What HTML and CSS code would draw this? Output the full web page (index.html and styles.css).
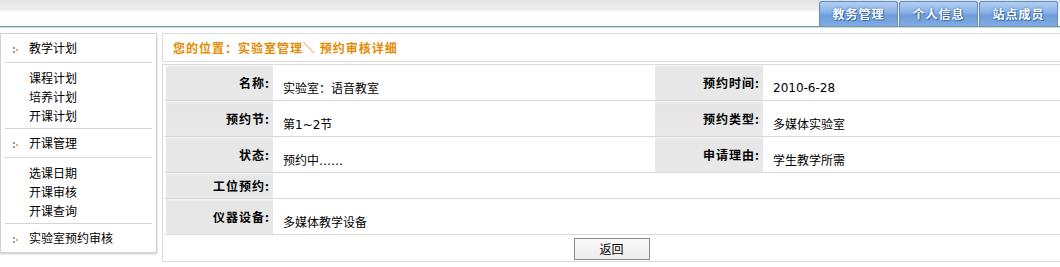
FILE: index.html
```html
<!DOCTYPE html>
<html>
<head>
<meta charset="utf-8">
<title>预约审核详细</title>
<link rel="stylesheet" href="styles.css">
</head>
<body>

<div class="top">
  <div class="tabs">
    <a class="tab" href="#">教务管理</a>
    <a class="tab" href="#">个人信息</a>
    <a class="tab" href="#">站点成员</a>
  </div>
</div>

<div class="main">
  <div class="side">
    <div class="head"><i class="dots"></i>教学计划</div>
    <ul class="sub">
      <li>课程计划</li>
      <li>培养计划</li>
      <li>开课计划</li>
    </ul>
    <div class="head"><i class="dots"></i>开课管理</div>
    <ul class="sub">
      <li>选课日期</li>
      <li>开课审核</li>
      <li>开课查询</li>
    </ul>
    <div class="head last"><i class="dots"></i>实验室预约审核</div>
  </div>

  <div class="content">
    <div class="crumb">您的位置：实验室管理＼ 预约审核详细</div>
    <table class="detail">
      <colgroup>
        <col class="c1"><col class="c2"><col class="c3"><col>
      </colgroup>
      <tr>
        <td class="lab first">名称:</td>
        <td class="val">实验室：语音教室</td>
        <td class="lab">预约时间:</td>
        <td class="val">2010-6-28</td>
      </tr>
      <tr>
        <td class="lab first">预约节:</td>
        <td class="val">第1~2节</td>
        <td class="lab">预约类型:</td>
        <td class="val">多媒体实验室</td>
      </tr>
      <tr>
        <td class="lab first">状态:</td>
        <td class="val">预约中……</td>
        <td class="lab">申请理由:</td>
        <td class="val">学生教学所需</td>
      </tr>
      <tr class="short">
        <td class="lab first">工位预约:</td>
        <td class="val" colspan="3"></td>
      </tr>
      <tr>
        <td class="lab first">仪器设备:</td>
        <td class="val" colspan="3">多媒体教学设备</td>
      </tr>
      <tr class="btnrow">
        <td colspan="4"><button class="btn" type="button">返回</button></td>
      </tr>
    </table>
  </div>
</div>

</body>
</html>
```

FILE: styles.css
```css
body {margin:0; background:#fff; font:12px "DejaVu Sans", "Noto Sans CJK SC", sans-serif; color:#000; overflow:hidden;}

.top {height:26px; border-bottom:1px solid #6c979b; box-shadow:0 1px 0 #cfdcdd;
  background:linear-gradient(#e4e4e4, #f0f0f0 10px, #fff 12px, #fff);
  display:flex; justify-content:flex-end; align-items:flex-end; padding-right:2px;}
.tabs {display:flex; gap:1px;}
.tab {display:block; width:77px; height:24px; line-height:24px; text-align:center; text-decoration:none;
  color:#fff; font-weight:bold; letter-spacing:1px; font-family:"Noto Sans CJK SC", sans-serif;
  background:linear-gradient(#b3d0f3, #86b0e6 45%, #6f9cdb 55%, #80aae2);
  border:1px solid #5d8bcc; border-bottom:none; border-radius:3px 3px 0 0;
  text-shadow:0 0 2px #2f5f9e, 1px 1px 0 #3d6cad;}

.main {display:flex; gap:5px; margin-top:6px;}

.side {width:155px; flex:none; border:1px solid #d2d2d2; box-shadow:0 1px 2px #c8c8c8; align-self:flex-start;
  font-family:"Noto Sans CJK SC", sans-serif;}
.head {height:28px; line-height:28px; margin:0 4px; padding-left:8px; border-bottom:1px solid #d6d6d6;}
.head.last {border-bottom:none;}
.dots {display:inline-block; width:5px; height:6px; margin-right:11px; vertical-align:middle;
  background:radial-gradient(circle, #999 0.9px, transparent 1.1px) 0 0/2px 2px no-repeat,
             radial-gradient(circle, #999 0.9px, transparent 1.1px) 0 4px/2px 2px no-repeat,
             radial-gradient(circle, #c7b28a 0.9px, transparent 1.1px) 3px 2px/2px 2px no-repeat;}
.sub {list-style:none; margin:0 4px; padding:5px 0 3px 24px; border-bottom:1px solid #d6d6d6;}
.sub li {line-height:19px;}

.content {flex:1; min-width:0;}
.crumb {height:27px; line-height:27px; border:1px solid #dcdcdc; border-right:none; padding-left:10px;
  color:#e48a00; font-weight:bold; letter-spacing:1px; font-family:"Noto Sans CJK SC", sans-serif;}

.detail {width:100%; margin-top:2px; table-layout:fixed; border-collapse:separate; border-spacing:0;
  border-top:1px solid #dcdcdc; border-left:1px solid #dcdcdc;}
.c1 {width:110px;} .c2 {width:382px;} .c3 {width:108px;}
.detail td {height:36px; padding:0; border-bottom:1px solid #d8d8d8; box-sizing:border-box;}
.detail tr.short td {height:26px;}
.detail tr.btnrow td {height:27px; text-align:center;}
.lab {background:linear-gradient(#f4f4f4, #e6e6e6 3px, #e9e9e9); text-align:right; padding-right:3px !important;
  font-weight:bold; letter-spacing:1px; font-family:"Noto Sans CJK SC", sans-serif; vertical-align:middle; white-space:nowrap;}
.lab.first {border-left:3px solid #fff;}
.val {padding:10px 0 0 10px !important; vertical-align:middle;}

.btn {width:76px; height:22px; margin-top:1px; padding:0; border:1px solid #8a8a8a; border-radius:0;
  background:linear-gradient(#fafafa, #ececec); font:12px "Noto Sans CJK SC", sans-serif; color:#000;}
```
